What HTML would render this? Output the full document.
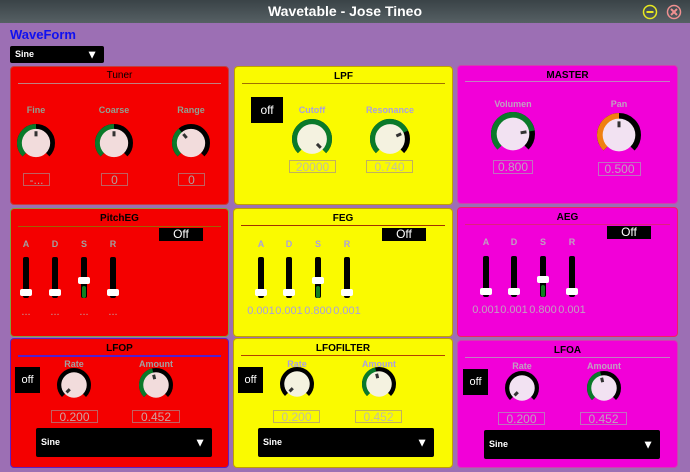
<!DOCTYPE html>
<html><head><meta charset="utf-8"><style>
*{margin:0;padding:0;box-sizing:border-box}
body{width:690px;height:472px;background:#9c6fb4;position:relative;overflow:hidden;font-family:"Liberation Sans","DejaVu Sans",sans-serif}
.a{position:absolute}
.tb{left:0;top:0;width:690px;height:23px;background:linear-gradient(#3a4347,#566064);color:#fff;font-weight:bold;font-size:14px;text-align:center;line-height:23px}
.p{position:absolute;border-radius:4px}
.red{background:#f40000;border:1px solid #c04040}
.yel{background:#fafa00;border:1px solid #c0a000}
.pink{background:#f200d8;border:1px solid #d040b0}
.t{position:absolute;left:0;width:100%;text-align:center;font-weight:bold;font-size:10px;color:#000}
.ln{position:absolute;height:1px}
.lb{position:absolute;font-size:9px;font-weight:bold;text-align:center;width:60px}
.vb{position:absolute;border:1px solid;font-size:12px;text-align:center;line-height:12px}
.off{position:absolute;background:#000;color:#fff;font-size:11px;text-align:center}
.dd{position:absolute;background:#000;color:#fff;font-size:9px;font-weight:bold;border-radius:2px}
.dd b{position:absolute;right:6px;top:50%;transform:translateY(-50%);font-size:12px}
.tr{position:absolute;width:6px;background:#000;border-radius:2px}
.th{position:absolute;width:12px;height:7px;background:#fff;border-radius:2px}
.sv{position:absolute;font-size:11px;text-align:center;width:30px}
</style></head><body>
<div class="a tb">Wavetable - Jose Tineo</div>
<svg class="a" style="left:641px;top:3px" width="46" height="18"><circle cx="9" cy="9" r="6.5" fill="none" stroke="#e8e820" stroke-width="1.5"/><line x1="5.5" y1="9" x2="12.5" y2="9" stroke="#e8e820" stroke-width="2"/><circle cx="33" cy="9" r="6.5" fill="none" stroke="#f09090" stroke-width="1.5"/><path d="M30 6L36 12M36 6L30 12" stroke="#f09090" stroke-width="2"/></svg>
<div class="a" style="left:10px;top:27px;color:#1010f0;font-weight:bold;font-size:13px">WaveForm</div>
<div class="dd" style="left:10px;top:46px;width:94px;height:17px;line-height:17px;padding-left:5px">Sine<b>▼</b></div>

<div class="p red" style="left:10px;top:66px;width:219px;height:139px"><div class="t" style="top:3px;font-weight:normal">Tuner</div><div class="ln" style="left:7px;right:7px;top:16px;background:#c08080"></div></div>
<div class="p yel" style="left:234px;top:66px;width:219px;height:139px"><div class="t" style="top:4px">LPF</div><div class="ln" style="left:7px;right:7px;top:16px;background:#a07000"></div></div>
<div class="p pink" style="left:457px;top:65px;width:221px;height:139px"><div class="t" style="top:4px">MASTER</div><div class="ln" style="left:7px;right:7px;top:15px;background:#c080c0"></div></div>
<div class="p red" style="left:10px;top:208px;width:219px;height:129px;border-color:#80a040"><div class="t" style="top:4px">PitchEG</div><div class="ln" style="left:7px;right:7px;top:17px;background:#a06000"></div></div>
<div class="p yel" style="left:233px;top:208px;width:220px;height:129px"><div class="t" style="top:4px">FEG</div><div class="ln" style="left:7px;right:7px;top:16px;background:#a03000"></div></div>
<div class="p pink" style="left:457px;top:207px;width:221px;height:130px;border-color:#f02060"><div class="t" style="top:4px">AEG</div><div class="ln" style="left:7px;right:7px;top:16px;background:#e02080"></div></div>
<div class="p red" style="left:10px;top:338px;width:219px;height:130px;border-color:#6020c0"><div class="t" style="top:4px">LFOP</div><div class="ln" style="left:7px;right:7px;top:16px;height:2px;background:#5020d0"></div></div>
<div class="p yel" style="left:233px;top:338px;width:220px;height:130px"><div class="t" style="top:4px">LFOFILTER</div><div class="ln" style="left:7px;right:7px;top:16px;background:#b04000"></div></div>
<div class="p pink" style="left:457px;top:340px;width:221px;height:128px"><div class="t" style="top:4px">LFOA</div><div class="ln" style="left:7px;right:7px;top:16px;background:#c080c0"></div></div>

<div class="lb" style="left:6px;top:105px;color:#90a090">Fine</div>
<div class="lb" style="left:84px;top:105px;color:#90a090">Coarse</div>
<div class="lb" style="left:161px;top:105px;color:#90a090">Range</div>
<div class="vb" style="left:23px;top:173px;width:27px;height:13px;color:#b0a0a0;border-color:#c06060">-...</div>
<div class="vb" style="left:101px;top:173px;width:27px;height:13px;color:#b0a0a0;border-color:#c06060">0</div>
<div class="vb" style="left:178px;top:173px;width:27px;height:13px;color:#b0a0a0;border-color:#c06060">0</div>

<div class="off" style="left:251px;top:97px;width:32px;height:26px;line-height:26px;font-size:12px">off</div>
<div class="lb" style="left:282px;top:105px;color:#a8a0e0">Cutoff</div>
<div class="lb" style="left:360px;top:105px;color:#a8a0e0">Resonance</div>
<div class="vb" style="left:289px;top:160px;width:47px;height:13px;color:#c0c0a0;border-color:#c0b060">20000</div>
<div class="vb" style="left:366px;top:160px;width:47px;height:13px;color:#c0c0a0;border-color:#c0b060">0.740</div>

<div class="lb" style="left:483px;top:99px;color:#c0a0c0">Volumen</div>
<div class="lb" style="left:589px;top:99px;color:#c0a0c0">Pan</div>
<div class="vb" style="left:493px;top:160px;width:40px;height:14px;color:#c0a0c0;border-color:#c070c0">0.800</div>
<div class="vb" style="left:598px;top:162px;width:43px;height:14px;color:#c0a0c0;border-color:#c070c0">0.500</div>

<div class="off" style="left:159px;top:228px;width:44px;height:13px;line-height:13px;font-size:12px">Off</div>
<div class="off" style="left:382px;top:228px;width:44px;height:13px;line-height:13px;font-size:12px">Off</div>
<div class="off" style="left:607px;top:226px;width:44px;height:13px;line-height:13px;font-size:12px">Off</div>

<div class="off" style="left:15px;top:367px;width:25px;height:26px;line-height:26px">off</div>
<div class="off" style="left:238px;top:367px;width:25px;height:26px;line-height:26px">off</div>
<div class="off" style="left:463px;top:369px;width:25px;height:26px;line-height:26px">off</div>
<div class="lb" style="left:44px;top:359px;color:#a0a0a0">Rate</div>
<div class="lb" style="left:126px;top:359px;color:#a0a0a0">Amount</div>
<div class="lb" style="left:267px;top:359px;color:#a8a0e0">Rate</div>
<div class="lb" style="left:349px;top:359px;color:#a8a0e0">Amount</div>
<div class="lb" style="left:492px;top:361px;color:#c0a0c0">Rate</div>
<div class="lb" style="left:574px;top:361px;color:#c0a0c0">Amount</div>
<div class="vb" style="left:51px;top:410px;width:47px;height:13px;color:#d0a0a0;border-color:#c06060">0.200</div>
<div class="vb" style="left:132px;top:410px;width:48px;height:13px;color:#d0a0a0;border-color:#c06060">0.452</div>
<div class="vb" style="left:273px;top:410px;width:47px;height:13px;color:#c0c0a0;border-color:#c0b060">0.200</div>
<div class="vb" style="left:355px;top:410px;width:47px;height:13px;color:#c0c0a0;border-color:#c0b060">0.452</div>
<div class="vb" style="left:498px;top:412px;width:47px;height:13px;color:#c0a0c0;border-color:#c070c0">0.200</div>
<div class="vb" style="left:580px;top:412px;width:47px;height:13px;color:#c0a0c0;border-color:#c070c0">0.452</div>
<div class="dd" style="left:36px;top:428px;width:176px;height:29px;line-height:29px;padding-left:5px">Sine<b>▼</b></div>
<div class="dd" style="left:258px;top:428px;width:176px;height:29px;line-height:29px;padding-left:5px">Sine<b>▼</b></div>
<div class="dd" style="left:484px;top:430px;width:176px;height:29px;line-height:29px;padding-left:5px">Sine<b>▼</b></div>

<div class="lb" style="left:-4px;top:239px;color:#a0a0a0">A</div><div class="lb" style="left:25px;top:239px;color:#a0a0a0">D</div><div class="lb" style="left:54px;top:239px;color:#a0a0a0">S</div><div class="lb" style="left:83px;top:239px;color:#a0a0a0">R</div>
<div class="lb" style="left:231px;top:239px;color:#a8a0e0">A</div><div class="lb" style="left:259px;top:239px;color:#a8a0e0">D</div><div class="lb" style="left:288px;top:239px;color:#a8a0e0">S</div><div class="lb" style="left:317px;top:239px;color:#a8a0e0">R</div>
<div class="lb" style="left:456px;top:237px;color:#c0a0c0">A</div><div class="lb" style="left:484px;top:237px;color:#c0a0c0">D</div><div class="lb" style="left:513px;top:237px;color:#c0a0c0">S</div><div class="lb" style="left:542px;top:237px;color:#c0a0c0">R</div>
<div class="sv" style="left:11px;top:306px;color:#c0a0a0">...</div><div class="sv" style="left:40px;top:306px;color:#c0a0a0">...</div><div class="sv" style="left:69px;top:306px;color:#c0a0a0">...</div><div class="sv" style="left:98px;top:306px;color:#c0a0a0">...</div>
<div class="sv" style="left:246px;top:305px;color:#a8a0e0">0.001</div><div class="sv" style="left:274px;top:305px;color:#a8a0e0">0.001</div><div class="sv" style="left:303px;top:305px;color:#a8a0e0">0.800</div><div class="sv" style="left:332px;top:305px;color:#a8a0e0">0.001</div>
<div class="sv" style="left:471px;top:304px;color:#c0a0c0">0.001</div><div class="sv" style="left:499px;top:304px;color:#c0a0c0">0.001</div><div class="sv" style="left:528px;top:304px;color:#c0a0c0">0.800</div><div class="sv" style="left:557px;top:304px;color:#c0a0c0">0.001</div>

<script>
function slider(cx,top,bot,v){
 var h=bot-top;document.body.insertAdjacentHTML('beforeend',
 '<div class="tr" style="left:'+(cx-3)+'px;top:'+top+'px;height:'+h+'px"></div>'+
 (v>0.3?'<div class="tr" style="left:'+(cx-2)+'px;width:4px;background:#108020;top:'+(top+h*(1-v)+4)+'px;height:'+(h*v-4)+'px"></div>':'')+
 '<div class="th" style="left:'+(cx-6)+'px;top:'+(top+(h-7)*(1-v))+'px"></div>');
}
[[26,55,84,113,257,298],[261,289,318,347,257,298],[486,514,543,572,256,297]].forEach(function(g){
 slider(g[0],g[4],g[5],0.05);slider(g[1],g[4],g[5],0.05);slider(g[2],g[4],g[5],0.4);slider(g[3],g[4],g[5],0.05);
});
function pt(cx,cy,r,a){a=a*Math.PI/180;return [cx+r*Math.sin(a),cy-r*Math.cos(a)];}
function arc(cx,cy,r,a0,a1,col,w){
 if(a1-a0<0.5)return '';var p0=pt(cx,cy,r,a0),p1=pt(cx,cy,r,a1);
 return '<path d="M'+p0[0]+' '+p0[1]+' A'+r+' '+r+' 0 '+((a1-a0)>180?1:0)+' 1 '+p1[0]+' '+p1[1]+'" fill="none" stroke="'+col+'" stroke-width="'+w+'"/>';
}
function knob(cx,cy,R,v,col,face){
 var w=R*0.28,rr=R-w/2,a=-135+270*v,s='';
 s+=arc(cx,cy,rr,-135,135,'#000',w)+arc(cx,cy,rr,-135,a,col,w);
 s+='<circle cx="'+cx+'" cy="'+cy+'" r="'+(R-w+0.5)+'" fill="'+face+'"/>';
 var q0=pt(cx,cy,R*0.35,a),q1=pt(cx,cy,R*0.62,a);
 s+='<line x1="'+q0[0]+'" y1="'+q0[1]+'" x2="'+q1[0]+'" y2="'+q1[1]+'" stroke="#333" stroke-width="3"/>';
 return s;
}
var s='';
var g='#0a7a2a';
s+=knob(36,143,19,0.5,g,'#f2dcdc')+knob(114,143,19,0.5,g,'#f2dcdc')+knob(191,143,19,0.35,g,'#f2dcdc');
s+=knob(312,139,20,1,g,'#f4f2e0')+knob(390,139,20,0.74,g,'#f4f2e0');
s+=knob(513,134,22,0.8,g,'#f2e2f2')+knob(619,135,22,0.5,'#f08010','#f2e2f2');
s+=knob(74,385,17,0,g,'#f2dcdc')+knob(156,385,17,0.452,g,'#f2dcdc');
s+=knob(297,384,17,0,g,'#f4f2e0')+knob(379,384,17,0.452,g,'#f4f2e0');
s+=knob(522,388,17,0,g,'#f2e2f2')+knob(604,388,17,0.452,g,'#f2e2f2');
document.body.insertAdjacentHTML('beforeend','<svg class="a" style="left:0;top:0" width="690" height="472">'+s+'</svg>');
</script>
</body></html>
